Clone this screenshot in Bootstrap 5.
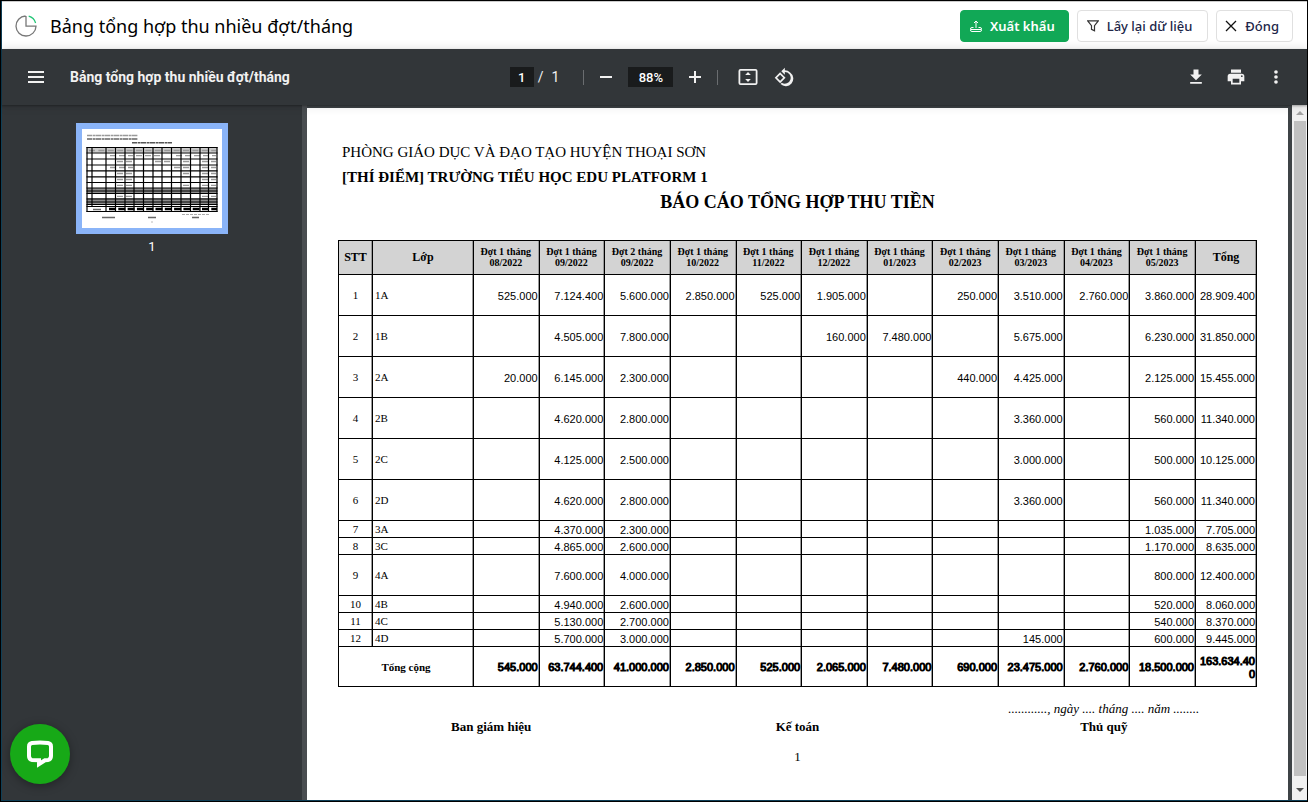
<!DOCTYPE html>
<html lang="vi">
<head>
<meta charset="utf-8">
<meta name="viewport" content="width=device-width, initial-scale=1">
<title>Bảng tổng hợp thu nhiều đợt/tháng</title>
<link href="https://cdn.jsdelivr.net/npm/bootstrap@5.3.0/dist/css/bootstrap.min.css" rel="stylesheet">
<style>
  body { font-family: "Noto Sans", "Open Sans", sans-serif; color: #000; background: #323639; border: 1px solid #000; }
  .app-frame { border-left: 1px solid #0f3f57; border-bottom: 1px solid #0f3f57; }
  .app-head { height: 48px; padding: 0 14px 0 13px; border-top: 1px solid #ccc; }
  .app-title { font-size: 18px; line-height: 24px; margin-left: 13px; }
  .app-btn { --bs-btn-font-size: 13px; --bs-btn-line-height: 20px; --bs-btn-padding-y: 5px; --bs-btn-padding-x: 9px; --bs-btn-border-radius: 4px;
    --bs-btn-color: #212648; --bs-btn-border-color: #e0e0e0; --bs-btn-bg: #fff; font-weight: 500; }
  .app-btn-green { --bs-btn-color: #fff; --bs-btn-bg: #11a856; --bs-btn-border-color: #11a856; font-weight: 600; padding-right: 13px; }
  .app-btn-filter { padding-right: 15px; }
  .app-btn-close { padding-right: 13px; padding-left: 8px; }

  .pdf-bar { height: 56px; background: #323639; color: #f1f1f1; font-family: Roboto, sans-serif; font-size: 14px; box-shadow: 0 -2px 8px rgba(0,0,0,.09), 0 4px 8px rgba(0,0,0,.06), 0 1px 2px rgba(0,0,0,.3); z-index: 2; padding: 0 19px 0 22px; }
  .pdf-name { font-weight: 700; font-size: 14px; margin: 0 0 0 22px; }
  .pdf-icon { background: none; border: 0; padding: 0; width: 24px; height: 24px; color: #f1f1f1; display: flex; align-items: center; justify-content: center; }
  .pdf-box { background: #191b1c; color: #fff; border: 0; height: 20px; padding: 0; text-align: center; font-size: 13px; font-weight: 500; }
  .pdf-box-page { width: 24px; }
  .pdf-box-zoom { width: 45px; }
  .pdf-rule { width: 1px; height: 15px; background: #6a6d70; }
  .pdf-rule-end { margin: 0 14px 0 12px; }
  .pdf-turn { margin: 0 6px 0 12px; }

  .thumb-side { width: 300px; padding-top: 18px; background: #323639; color: #fff; font-family: Roboto, sans-serif; font-size: 13px; }
  .thumb-link { border: 6px solid #8ab4f8; width: 152px; height: 111px; background: #fff; }
  .thumb-no { line-height: 18px; }
  .side-edge { width: 5px; background: #494d50; }
  .doc-area { background: #3e4346; padding: 3px 4px 0 0; }
  .doc-page { background: #fff; font-family: "Liberation Serif", "Times New Roman", serif; padding: 32px 31px 0 31px; }
  .doc-line { font-size: 15px; line-height: 25px; padding-left: 4px; margin: 0; }
  .doc-head { font-size: 18px; line-height: 24px; font-weight: 700; text-align: center; margin: 0 0 26px; }
  .sum-table { table-layout: fixed; width: 100%; border-collapse: collapse; font-size: 11px; line-height: 13px; }
  .sum-table th, .sum-table td { border: 1px solid #000; padding: 2px 1px 0; vertical-align: middle; box-shadow: inset -1px 0 #999; }
  .sum-table thead th { background: #d3d3d3; height: 34px; text-align: center; font-size: 10px; line-height: 11px; padding: 0 1px 2px 0; }
  .sum-table thead .big-th { font-size: 12px; padding: 0; }
  .sum-table tbody tr { height: 41px; }
  .sum-table tbody .low-row { height: 17px; }
  .sum-table td { font-family: "Liberation Sans", Arial, sans-serif; text-align: right; }
  .sum-table td:nth-child(-n+2) { font-family: inherit; padding-top: 1px; }
  .sum-table td:first-child { text-align: center; }
  .sum-table td:nth-child(2) { text-align: left; padding-left: 2px; }
  .sum-table tfoot tr { height: 40px; }
  .sum-table tfoot td, .sum-table tfoot td:nth-child(-n+2) { font-family: "Liberation Sans", Arial, sans-serif; text-align: right; -webkit-text-stroke: 1px #000; overflow-wrap: anywhere; padding: 2px 1px 0 0; }
  .sum-table tfoot th { text-align: center; font-size: 11px; }
  .col-no { width: 34px; } .col-class { width: 101px; } .col-sum { width: 61px; }
  .sign-row { font-size: 13px; line-height: 18px; padding-top: 13px; }
  .page-no { font-size: 13px; line-height: 18px; padding-top: 12px; }

  .scroll-rail { width: 15px; background: #f1f1f1; padding: 0 1px 0 2px; }
  .scroll-cap { height: 16px; }
  .scroll-knob { background: #c1c1c1; }

  .chat-btn { position: fixed; left: 10px; bottom: 18px; width: 60px; height: 60px; background: #17a917; border: 0; border-radius: 50%; box-shadow: 0 2px 10px rgba(0,0,0,.35); padding: 0; z-index: 5; }
</style>
</head>
<body class="vh-100 overflow-hidden">
<div class="app-frame h-100 d-flex flex-column">
  <header class="app-head bg-white d-flex align-items-center flex-shrink-0">
    <svg width="22" height="22" viewBox="0 0 22 22" fill="none" stroke-width="1.3" aria-hidden="true">
      <path d="M10.5 1A10 10 0 1 0 21 11.2H11V1" stroke="#777"/>
      <path d="M13.7 1.2A10 10 0 0 1 20.6 8" stroke="#20c575"/>
    </svg>
    <h1 class="app-title fw-normal mb-0 me-auto">Bảng tổng hợp thu nhiều đợt/tháng</h1>
    <div class="d-flex gap-2">
      <button type="button" class="btn app-btn app-btn-green d-flex align-items-center gap-2">
        <svg width="12" height="12" viewBox="0 0 12 12" fill="none" stroke="currentColor" aria-hidden="true"><path d="M6 8V1M4 3l2-2 2 2M3.5 7.5H2a1.5 1.5 0 0 0-1.5 1.7v.6A1.5 1.5 0 0 0 2 11.500h8a1.500 1.500 0 0 0 1.500-1.700v-.6A1.500 1.500 0 0 0 10 7.500H8.500M1 9.500h10"/></svg>Xuất khẩu</button>
      <button type="button" class="btn app-btn app-btn-filter d-flex align-items-center gap-2">
        <svg width="12" height="12" viewBox="0 0 12 12" fill="none" stroke="#333" stroke-width="1.2" aria-hidden="true"><path d="M.7.8h10.600L7.500 5.600v5.200l-3-1.500V5.600z"/></svg>Lấy lại dữ liệu</button>
      <button type="button" class="btn app-btn app-btn-close d-flex align-items-center gap-2">
        <svg width="12" height="12" viewBox="0 0 12 12" fill="none" stroke="#111" stroke-width="1.300" aria-hidden="true"><path d="M1 1l10 10M11 1L1 11"/></svg>Đóng</button>
    </div>
  </header>

  <div class="pdf-bar d-flex align-items-center flex-shrink-0 position-relative">
    <div class="d-flex align-items-center flex-fill w-25">
      <button type="button" class="pdf-icon" aria-label="Menu"><svg width="24" height="24" viewBox="0 0 24 24" fill="currentColor"><path d="M4 6h16v2H4zM4 11h16v2H4zM4 16h16v2H4z"/></svg></button>
      <h2 class="pdf-name">Bảng tổng hợp thu nhiều đợt/tháng</h2>
    </div>
    <div class="d-flex align-items-center">
      <input class="pdf-box pdf-box-page" value="1" aria-label="Trang">
      <span class="ms-1">/</span><span class="ms-2">1</span>
      <span class="pdf-rule ms-4"></span>
      <button type="button" class="pdf-icon ms-2 me-2 ps-1" aria-label="Thu nhỏ"><svg width="14" height="14" viewBox="0 0 14 14" fill="currentColor"><path d="M1 6h12v2H1z"/></svg></button>
      <input class="pdf-box pdf-box-zoom ms-1" value="88%" aria-label="Thu phóng">
      <button type="button" class="pdf-icon ms-2 ps-1" aria-label="Phóng to"><svg width="14" height="14" viewBox="0 0 14 14" fill="currentColor"><path d="M1 6h5V1h2v5h5v2H8v5H6V8H1z"/></svg></button>
      <span class="pdf-rule pdf-rule-end"></span>
      <button type="button" class="pdf-icon ms-1" aria-label="Vừa trang"><svg width="24" height="24" viewBox="0 0 24 24" fill="currentColor" fill-rule="evenodd"><path d="M4.500 4h15A2 2 0 0 1 21.500 6v12a2 2 0 0 1-2 2h-15a2 2 0 0 1-2-2V6a2 2 0 0 1 2-2zm-.2 1.800v12.400h15.400V5.800zM12 7l2.800 3H9.200zM9.200 14h5.600L12 17z"/></svg></button>
      <button type="button" class="pdf-icon pdf-turn" aria-label="Xoay"><svg width="20" height="20" viewBox="0 0 24 24" fill="currentColor"><path d="M7.340 6.410L.86 12.900l6.490 6.480 6.490-6.480zM3.690 12.900l3.660-3.660L11 12.900l-3.660 3.660zM19.360 6.640A8.950 8.950 0 0 0 13 4V.76L8.760 5 13 9.240V6a7 7 0 1 1-3.700 12.940l-1.460 1.460A9 9 0 1 0 19.360 6.640z"/></svg></button>
    </div>
    <div class="d-flex align-items-center justify-content-end flex-fill w-25 gap-3">
      <button type="button" class="pdf-icon" aria-label="Tải xuống"><svg width="20" height="20" viewBox="0 0 24 24" fill="currentColor"><path d="M19 9h-4V3H9v6H5l7 7zM5 18v2h14v-2z"/></svg></button>
      <button type="button" class="pdf-icon" aria-label="In"><svg width="20" height="20" viewBox="0 0 24 24" fill="currentColor"><path d="M19 8H5a3 3 0 0 0-3 3v6h4v4h12v-4h4v-6a3 3 0 0 0-3-3zm-3 11H8v-5h8zm3-7a1 1 0 1 1 0-2 1 1 0 0 1 0 2zM18 3H6v4h12z"/></svg></button>
      <button type="button" class="pdf-icon" aria-label="Thêm"><svg width="20" height="20" viewBox="0 0 24 24" fill="currentColor"><circle cx="12" cy="6" r="2.200"/><circle cx="12" cy="12" r="2.200"/><circle cx="12" cy="18" r="2.200"/></svg></button>
    </div>
  </div>

  <main class="d-flex flex-grow-1 overflow-hidden">
    <aside class="thumb-side flex-shrink-0 d-flex flex-column align-items-center">
      <a href="#page1" class="thumb-link d-block" aria-label="Trang 1">
        <svg class="d-block" width="140" height="99" viewBox="0 0 140 99" aria-hidden="true">
          <g stroke="#999" stroke-width="1.300" stroke-dasharray="5 .6 3 .4"><path d="M5 6.500h51"/><path d="M5 10h51" stroke="#666"/><path d="M50 13.800h40" stroke="#555" stroke-width="1.600"/></g>
          <path d="M5 19h130v4.500H5z" fill="#ccc"/>
          <path d="M5 59h130v5H5zM5 69h130v7H5z" fill="#8c8c8c"/>
          <g stroke="#999" stroke-width="1.300">
            <path d="M7 21.500h127" stroke-dasharray="6 3.400"/>
            <path d="M28 26.700h23M54 26.700h26M94 26.700h40" stroke-dasharray="6 3"/>
            <path d="M35 32.500h16M73 32.500h16M101 32.500h6M120 32.500h14M28 38.500h23M92 38.500h15M120 38.500h14M35 44.500h16M101 44.500h6M120 44.500h14M35 50.500h16M120 50.500h14M35 56.300h16M101 56.300h6M120 56.300h14M35 67.300h16M120 67.300h14" stroke-dasharray="6 3"/>
          </g>
          <g stroke="#000" stroke-width="1.200"><path d="M4.500 18.500h131M4.500 24h131M4.500 30h131M4.500 36h131M4.500 41.800h131M4.500 47.800h131M4.500 53.500h131M4.500 59h131M4.500 62h131M4.500 64.500h131M4.500 70h131M4.500 73h131M4.500 75.500h131M4.500 77.500h131M4.500 82.500h131"/>
          <path d="M5 18v65M10 18v60M24 18v65M33.500 18v65M43 18v65M52 18v65M61.500 18v65M71 18v65M80 18v65M89.500 18v65M99 18v65M108.500 18v65M118 18v65M126.500 18v65M135 18v65"/></g>
          <path d="M27 80h108" stroke="#000" stroke-width="2.400" stroke-dasharray="7 2.300"/>
          <path d="M11 80.500h8M20 88.500h13M66 88.500h8M110 88.500h7" stroke="#666" stroke-width="1.400"/><path d="M100 85.500h27" stroke="#aaa" stroke-dasharray="3 1"/><path d="M69.500 93h1" stroke="#777"/>
        </svg>
      </a>
      <span class="thumb-no mt-1">1</span>
    </aside>
    <div class="side-edge flex-shrink-0"></div>
    <div class="doc-area flex-grow-1 overflow-hidden d-flex">
      <article class="doc-page flex-grow-1" id="page1">
        <p class="doc-line">PHÒNG GIÁO DỤC VÀ ĐẠO TẠO HUYỆN THOẠI SƠN</p>
        <p class="doc-line fw-bold">[THÍ ĐIỂM] TRƯỜNG TIỂU HỌC EDU PLATFORM 1</p>
        <h3 class="doc-head">BÁO CÁO TỔNG HỢP THU TIỀN</h3>
        <table class="sum-table">
          <colgroup><col class="col-no"><col class="col-class"><col span="11"><col class="col-sum"></colgroup>
          <thead><tr><th class="big-th">STT</th><th class="big-th">Lớp</th><th>Đợt 1 tháng<br>08/2022</th><th>Đợt 1 tháng<br>09/2022</th><th>Đợt 2 tháng<br>09/2022</th><th>Đợt 1 tháng<br>10/2022</th><th>Đợt 1 tháng<br>11/2022</th><th>Đợt 1 tháng<br>12/2022</th><th>Đợt 1 tháng<br>01/2023</th><th>Đợt 1 tháng<br>02/2023</th><th>Đợt 1 tháng<br>03/2023</th><th>Đợt 1 tháng<br>04/2023</th><th>Đợt 1 tháng<br>05/2023</th><th class="big-th">Tổng</th></tr></thead>
          <tbody>
            <tr><td>1</td><td>1A</td><td>525.000</td><td>7.124.400</td><td>5.600.000</td><td>2.850.000</td><td>525.000</td><td>1.905.000</td><td></td><td>250.000</td><td>3.510.000</td><td>2.760.000</td><td>3.860.000</td><td>28.909.400</td></tr>
            <tr><td>2</td><td>1B</td><td></td><td>4.505.000</td><td>7.800.000</td><td></td><td></td><td>160.000</td><td>7.480.000</td><td></td><td>5.675.000</td><td></td><td>6.230.000</td><td>31.850.000</td></tr>
            <tr><td>3</td><td>2A</td><td>20.000</td><td>6.145.000</td><td>2.300.000</td><td></td><td></td><td></td><td></td><td>440.000</td><td>4.425.000</td><td></td><td>2.125.000</td><td>15.455.000</td></tr>
            <tr><td>4</td><td>2B</td><td></td><td>4.620.000</td><td>2.800.000</td><td></td><td></td><td></td><td></td><td></td><td>3.360.000</td><td></td><td>560.000</td><td>11.340.000</td></tr>
            <tr><td>5</td><td>2C</td><td></td><td>4.125.000</td><td>2.500.000</td><td></td><td></td><td></td><td></td><td></td><td>3.000.000</td><td></td><td>500.000</td><td>10.125.000</td></tr>
            <tr><td>6</td><td>2D</td><td></td><td>4.620.000</td><td>2.800.000</td><td></td><td></td><td></td><td></td><td></td><td>3.360.000</td><td></td><td>560.000</td><td>11.340.000</td></tr>
            <tr class="low-row"><td>7</td><td>3A</td><td></td><td>4.370.000</td><td>2.300.000</td><td></td><td></td><td></td><td></td><td></td><td></td><td></td><td>1.035.000</td><td>7.705.000</td></tr>
            <tr class="low-row"><td>8</td><td>3C</td><td></td><td>4.865.000</td><td>2.600.000</td><td></td><td></td><td></td><td></td><td></td><td></td><td></td><td>1.170.000</td><td>8.635.000</td></tr>
            <tr><td>9</td><td>4A</td><td></td><td>7.600.000</td><td>4.000.000</td><td></td><td></td><td></td><td></td><td></td><td></td><td></td><td>800.000</td><td>12.400.000</td></tr>
            <tr class="low-row"><td>10</td><td>4B</td><td></td><td>4.940.000</td><td>2.600.000</td><td></td><td></td><td></td><td></td><td></td><td></td><td></td><td>520.000</td><td>8.060.000</td></tr>
            <tr class="low-row"><td>11</td><td>4C</td><td></td><td>5.130.000</td><td>2.700.000</td><td></td><td></td><td></td><td></td><td></td><td></td><td></td><td>540.000</td><td>8.370.000</td></tr>
            <tr class="low-row"><td>12</td><td>4D</td><td></td><td>5.700.000</td><td>3.000.000</td><td></td><td></td><td></td><td></td><td></td><td>145.000</td><td></td><td>600.000</td><td>9.445.000</td></tr>
          </tbody>
          <tfoot><tr><th colspan="2">Tổng cộng</th><td>545.000</td><td>63.744.400</td><td>41.000.000</td><td>2.850.000</td><td>525.000</td><td>2.065.000</td><td>7.480.000</td><td>690.000</td><td>23.475.000</td><td>2.760.000</td><td>18.500.000</td><td>163.634.400</td></tr></tfoot>
        </table>
        <div class="sign-row row g-0 text-center fw-bold align-items-end">
          <div class="col-4">Ban giám hiệu</div>
          <div class="col-4">Kế toán</div>
          <div class="col-4"><span class="fw-normal fst-italic">............, ngày .... tháng .... năm ........</span><br>Thủ quỹ</div>
        </div>
        <div class="page-no text-center">1</div>
      </article>
    </div>
    <div class="scroll-rail flex-shrink-0 d-flex flex-column" aria-hidden="true">
      <div class="scroll-cap d-flex align-items-center justify-content-center"><svg width="8" height="4" viewBox="0 0 8 4"><path d="M0 4l4-4 4 4z" fill="#a3a3a3"/></svg></div>
      <div class="scroll-knob flex-grow-1"></div>
      <div class="scroll-cap d-flex align-items-end justify-content-center mt-2 pb-2"><svg width="8" height="4" viewBox="0 0 8 4"><path d="M0 0l4 4 4-4z" fill="#505050"/></svg></div>
    </div>
  </main>
</div>
<button type="button" class="chat-btn d-flex align-items-center justify-content-center" aria-label="Trò chuyện">
  <svg width="30" height="30" viewBox="0 0 30 30" fill="none" aria-hidden="true"><path d="M7 4Q15 3 23 4 26 4.500 26 7.500V17q0 3.500-3 3.900l-3 .3-6 3.800V21.200L7 20.900Q4 20.500 4 17V7.500q0-3 3-3.500z" stroke="#fff" stroke-width="4"/></svg>
</button>
<script src="https://cdn.jsdelivr.net/npm/bootstrap@5.3.0/dist/js/bootstrap.bundle.min.js"></script>
</body>
</html>
